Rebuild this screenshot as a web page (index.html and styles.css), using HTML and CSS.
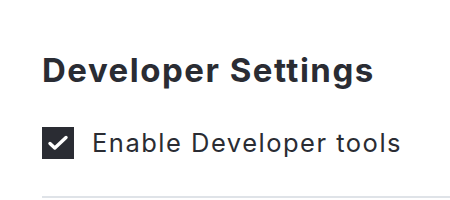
FILE: index.html
```html
<!DOCTYPE html>
<html lang="en">
<head>
  <meta charset="UTF-8">
  <title>Developer Settings</title>
  <link rel="stylesheet" href="styles.css">
</head>
<body>

<div class="settings">
  <h2 class="settings-title">Developer Settings</h2>

  <label class="check-row">
    <span class="check-box">
      <svg width="32" height="32" viewBox="0 0 32 32">
        <path d="M8 16.5 L12.8 21 L24 10.5" fill="none" stroke="white" stroke-width="3.4" stroke-linecap="round" stroke-linejoin="round"/>
      </svg>
    </span>
    <span class="check-label">Enable Developer tools</span>
  </label>

  <div class="divider"></div>
</div>

</body>
</html>
```

FILE: styles.css
```css
html, body {
  margin: 0;
  padding: 0;
  background: white;
  font-family: Inter, "Noto Sans", sans-serif;
  color: #2a2c33;
}

.settings {
  padding: 50px 0 0 42px;
}

.settings-title {
  margin: 0;
  font-size: 33px;
  line-height: 40px;
  font-weight: 700;
  letter-spacing: 1.5px;
}

.check-row {
  display: flex;
  align-items: center;
  gap: 18px;
  margin-top: 37px;
}

.check-box {
  width: 32px;
  height: 32px;
  background: #2a2c33;
  display: flex;
}

.check-label {
  font-size: 25.5px;
  line-height: 32px;
  letter-spacing: 1.5px;
}

.divider {
  height: 2px;
  background: #dfe3e8;
  margin-top: 37px;
}
```
